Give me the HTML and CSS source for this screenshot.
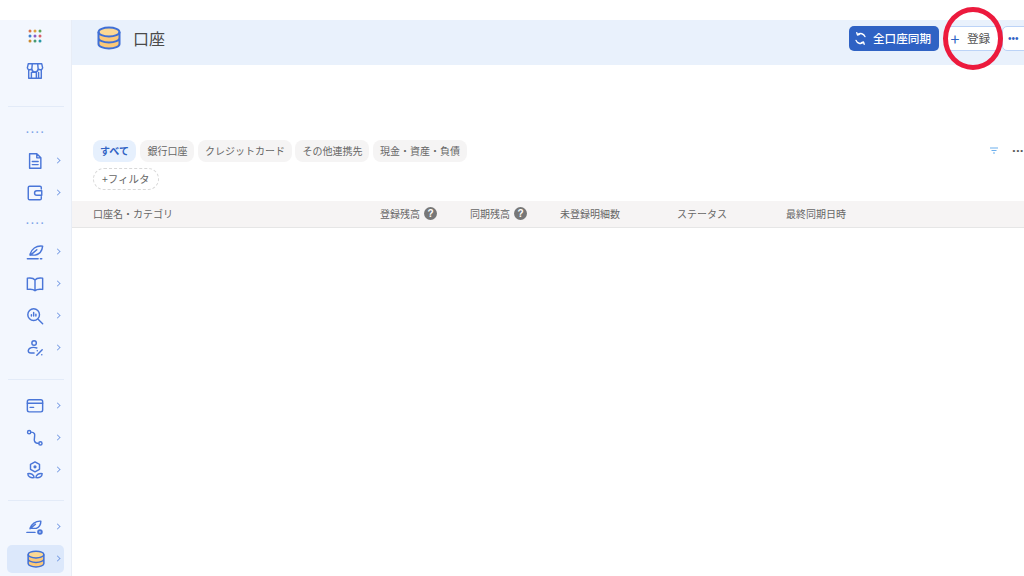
FILE: index.html
```html
<!DOCTYPE html>
<html lang="ja">
<head>
<meta charset="utf-8">
<title>口座</title>
<link rel="stylesheet" href="styles.css">
</head>
<body>
<div class="app">
  <aside class="side">
    <div class="nav-item top"><svg class="grid-ic" width="14" height="14" viewBox="0 0 14 14"><circle cx="2" cy="2" r="1.5" fill="#d9734a"/><circle cx="7" cy="2" r="1.5" fill="#e0a040"/><circle cx="12" cy="2" r="1.5" fill="#5fa55a"/><circle cx="2" cy="7" r="1.5" fill="#3f7fd0"/><circle cx="7" cy="7" r="1.5" fill="#8a5cc8"/><circle cx="12" cy="7" r="1.5" fill="#d9606a"/><circle cx="2" cy="12" r="1.5" fill="#c98a30"/><circle cx="7" cy="12" r="1.5" fill="#4a9a70"/><circle cx="12" cy="12" r="1.5" fill="#2a9aa8"/></svg></div>
    <div class="nav-item top store"><svg class="ic" viewBox="0 0 20 20"><path d="M2.500 2h15l1 4.500a2.800 2.800 0 0 1-5 1 3 3 0 0 1-7 0 2.800 2.800 0 0 1-5-1zM3 9v9h14V9M6 18v-6.500h5.500V18M14 11.500V18M7 2l-.5 5.500M13 2l.5 5.500"/></svg></div>
    <hr class="sep first">
    <div class="dots">····</div>
    <div class="nav-item"><svg class="ic" viewBox="0 0 20 20"><path d="M4 2h8l4.500 4.500V18H4zM12 2v4.500h4.500M7 10.500h6.500M7 14h6.500"/></svg><i class="chev"></i></div>
    <div class="nav-item"><svg class="ic" viewBox="0 0 20 20"><path d="M17 5.500V4a1.500 1.500 0 0 0-1.500-1.500H4A1.500 1.500 0 0 0 2.500 4v12A1.500 1.500 0 0 0 4 17.500h11.500A1.500 1.500 0 0 0 17 16v-2M17.500 7.500H12a2.500 2.500 0 0 0 0 5h5.500z"/></svg><i class="chev"></i></div>
    <div class="dots second">····</div>
    <div class="nav-item"><svg class="ic" viewBox="0 0 20 20"><path d="M4.500 12.500C6 7 11 2.500 18.500 3.500c-.5 5-3.500 9-8.500 10H4.500zM5 13.500l7-6M1.500 17.500h12M16 17.500h1.500"/></svg><i class="chev"></i></div>
    <div class="nav-item"><svg class="ic" viewBox="0 0 20 20"><path d="M10 5.500C8.500 3.500 5 3 1.500 3.500v12.500c3.500-.5 7 0 8.500 1.500 1.500-1.500 5-2 8.500-1.500V3.500C15 3 11.500 3.500 10 5.500zV17.500"/></svg><i class="chev"></i></div>
    <div class="nav-item"><svg class="ic" viewBox="0 0 20 20"><circle cx="8.500" cy="8.500" r="6.500"/><path d="M13.500 13.500l5 5M6 10V8.500M8.500 10V6M11 10V8"/></svg><i class="chev"></i></div>
    <div class="nav-item"><svg class="ic" viewBox="0 0 20 20"><circle cx="9" cy="4.500" r="2.500"/><path d="M12 10c-4-1.500-9-.5-9.500 3 0 2 1.500 2.500 3 2.500H9M12 18l6-6M12.500 13h.1M17.500 17.500h.1"/></svg><i class="chev"></i></div>
    <hr class="sep">
    <div class="nav-item"><svg class="ic" viewBox="0 0 20 20"><rect x="1.500" y="3" width="17" height="13.500" rx="2"/><path d="M1.500 7h17M4.500 11.500h4" /></svg><i class="chev"></i></div>
    <div class="nav-item"><svg class="ic" viewBox="0 0 20 20"><circle cx="3.500" cy="3.500" r="1.800"/><circle cx="16" cy="16" r="1.800"/><path d="M5.300 3.500C10 3.500 10 6 9.500 9s-1 7 4.700 7"/></svg><i class="chev"></i></div>
    <div class="nav-item"><svg class="ic" viewBox="0 0 20 20"><path d="M10 1l5 2.800v5.400L10 12 5 9.200V3.800z"/><circle cx="10" cy="6.500" r="1" fill="#3f6fd6"/><path d="M9 18.500c0-3-3-5-7-4.500 0 3.500 3 5 7 4.500zM11 18.500c0-3 3-5 7-4.500 0 3.500-3 5-7 4.500z"/></svg><i class="chev"></i></div>
    <hr class="sep third">
    <div class="nav-item"><svg class="ic" viewBox="0 0 20 20"><path d="M4.500 11.500C6 7 10.500 3 16.500 3.500c0 3.500-2 6.500-5 8H4.500zM4.500 12l6-5M1 16h9"/><circle cx="15.500" cy="15.500" r="2" stroke-width="2.200"/></svg><i class="chev"></i></div>
    <div class="nav-item active"><svg class="db small" viewBox="0 0 24 24"><use href="#db"/></svg><i class="chev"></i></div>
  </aside>

  <main class="main">
    <header class="head">
      <div class="title"><svg class="db" viewBox="0 0 24 24"><g id="db"><path class="db-fill" d="M1.500 6v12c0 2.500 4.700 4.500 10.500 4.500s10.500-2 10.500-4.500V6z"/><ellipse class="db-top" cx="12" cy="6" rx="10.500" ry="4.500"/><path class="db-line" d="M1.500 6v12c0 2.500 4.700 4.500 10.500 4.500s10.500-2 10.500-4.500V6M1.500 12c0 2.500 4.700 4.500 10.500 4.500s10.500-2 10.500-4.500"/></g></svg><h1>口座</h1></div>
      <div class="actions">
        <button class="btn primary"><svg class="sync" viewBox="0 0 14 14"><path d="M11.800 5A5 5 0 0 0 4 2.700M2.200 9A5 5 0 0 0 10 11.300M3 .8l.8 2.400 2.300-.7M11 13.200l-.8-2.400-2.300.7"/></svg>全口座同期</button>
        <button class="btn outline"><span class="plus">+</span>登録</button>
        <button class="btn more">•••</button>
      </div>
    </header>

    <section class="filters">
      <div class="chips">
        <span class="chip on">すべて</span>
        <span class="chip">銀行口座</span>
        <span class="chip">クレジットカード</span>
        <span class="chip">その他連携先</span>
        <span class="chip">現金・資産・負債</span>
      </div>
      <div class="tools">
        <svg class="funnel" viewBox="0 0 10 7"><path d="M1 1h8M2.500 3.500h5M4 6h2"/></svg>
        <span class="tool-more">•••</span>
      </div>
    </section>
    <div class="add-row"><span class="add">+フィルタ</span></div>

    <div class="thead">
      <div class="th c-name">口座名・カテゴリ</div>
      <div class="th c-reg">登録残高<span class="q">?</span></div>
      <div class="th c-sync">同期残高<span class="q">?</span></div>
      <div class="th c-un">未登録明細数</div>
      <div class="th c-st">ステータス</div>
      <div class="th c-last">最終同期日時</div>
    </div>
  </main>
</div>
<div class="red-ring"></div>
</body>
</html>
```
FILE: styles.css
```css
* { box-sizing: border-box; }
html, body { margin: 0; padding: 0; }
body {
  width: 1024px;
  height: 576px;
  overflow: hidden;
  background: #fff;
  font-family: "Noto Sans CJK JP", "Noto Sans", sans-serif;
  color: #555;
  position: relative;
}
.app { display: flex; height: 556px; margin-top: 20px; }

.side {
  width: 72px;
  flex: none;
  background: #f3f7fe;
  border-right: 1px solid #e8edf6;
  display: flex;
  flex-direction: column;
  padding-left: 7px;
}
.nav-item {
  width: 57px;
  height: 32px;
  flex: none;
  display: flex;
  align-items: center;
  padding-left: 19px;
  position: relative;
  border-radius: 5px;
}
.nav-item.top { padding-left: 21px; }
.nav-item.store { margin-top: 3px; padding-left: 19px; }
.nav-item.active { background: #dce8fb; margin-top: 2px; height: 28px; }
.ic {
  width: 18px;
  height: 18px;
  fill: none;
  stroke: #4a76d8;
  stroke-width: 1.600;
  stroke-linecap: round;
  stroke-linejoin: round;
}
.chev {
  position: absolute;
  left: 48px;
  top: 13px;
  width: 5px;
  height: 5px;
  border-top: 1.300px solid #6f95e2;
  border-right: 1.300px solid #6f95e2;
  transform: rotate(45deg) scale(.85);
}
.active .chev { top: 11px; }
.sep {
  width: 56px;
  margin: 15px 0 0 1px;
  border: 0;
  border-top: 1px solid #e3ebf8;
  height: 0;
}
.sep + .nav-item { margin-top: 10px; }
.sep.first { margin-top: 19px; }
.sep.third { margin-top: 14px; }
.dots {
  height: 14px;
  margin: 19px 0 0 0;
  padding-left: 19px;
  color: #7fa5e8;
  font: 700 10px/14px "Liberation Sans", sans-serif;
  letter-spacing: 1.600px;
}
.dots.second { margin-top: 8px; margin-bottom: 5px; }
.dots + .nav-item { margin-top: 5px; }
.dots.second + .nav-item { margin-top: 0; }

.main { flex: 1; min-width: 0; display: flex; flex-direction: column; }
.head {
  height: 45px;
  flex: none;
  background: #e9f1fc;
  display: flex;
  align-items: center;
  justify-content: space-between;
  padding: 0 0 9px 25px;
}
.title { display: flex; align-items: center; gap: 12px; }
.title h1 { margin: 0; font-size: 16px; font-weight: 400; color: #4a4a4a; line-height: 1; }
.db { width: 24px; height: 24px; display: block; }
.db.small { width: 18px; height: 18px; margin-left: 1px; }
.db-fill { fill: #fcc978; }
.db-top { fill: #fbd894; stroke: #3f6fd6; stroke-width: 2; }
.db-line { fill: none; stroke: #3f6fd6; stroke-width: 2; }
.actions { display: flex; align-items: center; margin-right: -21px; }
.btn {
  height: 25px;
  border: 0;
  border-radius: 5px;
  font-family: inherit;
  font-size: 11.600px;
  font-weight: 500;
  display: flex;
  align-items: center;
  padding: 0;
}
.primary { width: 90px; background: #2f62c4; color: #fff; padding-left: 5px; gap: 6px; margin-right: 7px; }
.sync { width: 13px; height: 13px; flex: none; fill: none; stroke: #fff; stroke-width: 1.500; stroke-linecap: round; stroke-linejoin: round; }
.outline { width: 55px; background: #fff; border: 1px solid #bcd3f7; padding-left: 2px; color: #555; font-weight: 400; margin-right: 1px; }
.plus { width: 12px; color: #2f62c4; font-size: 16px; line-height: 1; margin-right: 6px; font-weight: 400; }
.more { width: 43px; background: #fff; border: 1px solid #bcd3f7; color: #2f62c4; padding-left: 5px; font-size: 10px; font-family: "Liberation Sans", sans-serif; }

.filters {
  display: flex;
  justify-content: space-between;
  align-items: center;
  margin-top: 75px;
  padding: 0 0 0 21px;
}
.chips { display: flex; gap: 3.500px; }
.chip {
  height: 21.500px;
  line-height: 21px;
  padding: 0 7px;
  border-radius: 8px;
  background: #f5f4f4;
  font-size: 10px;
  color: #666;
  white-space: nowrap;
}
.chip.on { background: #e6f0fd; color: #2f62c4; font-weight: 700; margin-right: 1px; }
.tools { display: flex; align-items: center; gap: 14px; }
.funnel { width: 10px; height: 7px; fill: none; stroke: #6cb0ee; stroke-width: 1.200; }
.tool-more { font: 8px/1 "Liberation Sans", sans-serif; letter-spacing: 1px; color: #555; white-space: nowrap; }
.add-row { display: flex; align-items: flex-start; padding: 6.500px 0 0 21px; height: 39px; }
.add {
  height: 22px;
  line-height: 20px;
  padding: 0 8px;
  border: 1px dashed #d8d8d8;
  border-radius: 11px;
  font-size: 10.500px;
  color: #666;
  white-space: nowrap;
}
.thead {
  height: 27px;
  flex: none;
  background: #f6f4f4;
  border-bottom: 1px solid #e6e6e6;
  display: grid;
  grid-template-columns: 287px 90px 90px 117px 109px 1fr;
  padding-left: 21px;
  align-items: center;
}
.th { font-size: 10px; color: #666; display: flex; align-items: center; white-space: nowrap; }
.q {
  width: 13px;
  height: 13px;
  margin-left: 4px;
  border-radius: 50%;
  background: #777;
  color: #fff;
  font: 700 10px/13px "Liberation Sans", sans-serif;
  text-align: center;
}

.red-ring {
  position: absolute;
  left: 943px;
  top: 7px;
  width: 60px;
  height: 63px;
  border: 5px solid #ec1a3d;
  border-radius: 50%;
}
```
